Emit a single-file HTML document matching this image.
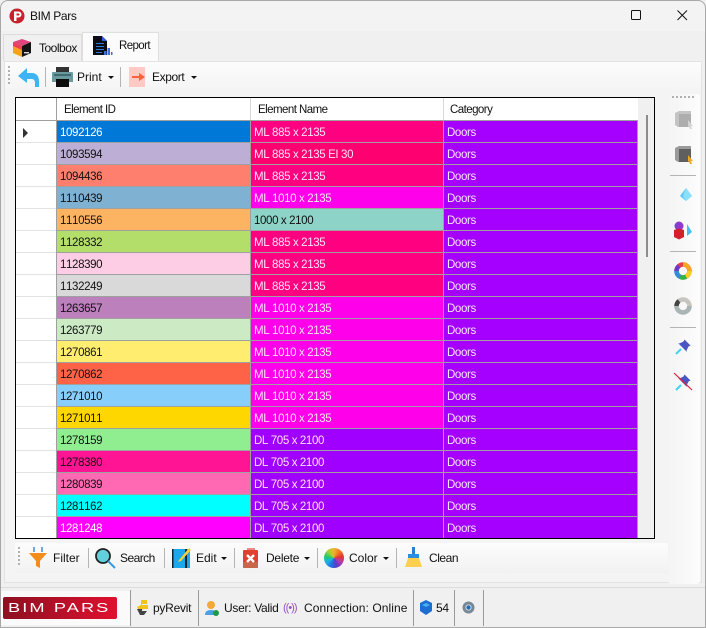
<!DOCTYPE html>
<html><head><meta charset="utf-8"><style>
*{box-sizing:border-box}
html,body{margin:0;padding:0;width:706px;height:628px;overflow:hidden;background:#f0f0f0;font-family:"Liberation Sans",sans-serif;font-size:12px;color:#111}
.a{position:absolute}
.t{position:absolute;white-space:nowrap;font-size:12px;line-height:16px;letter-spacing:-.25px}
.hd{font-size:11.5px;letter-spacing:-.55px}
.row{position:absolute;left:16px;width:622px;height:22px}
.row div{position:absolute;top:0;height:21px;line-height:24px;font-size:11.5px;letter-spacing:-.37px;font-kerning:none;padding-left:3px;white-space:nowrap}
.h{left:0;width:40px;background:#fff;border-bottom:1px solid #e3e3e3;height:22px!important}
.c1{left:41px;width:193px}
.c2{left:235px;width:192px}
.c3{left:428px;width:193px;background:#a500ff;color:#f5e8ff}
.w{color:#fff}.w2{color:#ffe3f4}
.sep{position:absolute;width:1px;background:#b4b4b4}
.car{position:absolute;width:0;height:0;border-left:3px solid transparent;border-right:3px solid transparent;border-top:3px solid #111}
.dots{position:absolute;width:2px;background:repeating-linear-gradient(#b0b0b0 0 2px,transparent 2px 4px)}
svg{position:absolute;overflow:visible}
</style></head><body>
<div class="a" style="left:0;top:0;width:706px;height:628px;background:#f0f0f0;border:1px solid #a8a8a8;border-radius:8px 8px 0 0"></div>
<div class="a" style="left:1px;top:1px;width:704px;height:30px;background:#f3f3f3;border-radius:8px 8px 0 0"></div>

<svg style="left:9px;top:8px" width="17" height="16" viewBox="0 0 17 16"><circle cx="8" cy="8" r="7.5" fill="#c8202c"/><path d="M5 13V3.5h4.5a3 3 0 0 1 0 6H7.5V13z" fill="#fff"/><path d="M7.5 5.5v2h2a1 1 0 0 0 0-2z" fill="#c8202c"/></svg>
<div class="t" style="left:30px;top:8px;letter-spacing:-.35px">BIM Pars</div>
<svg style="left:631px;top:10px" width="11" height="11"><rect x=".5" y=".5" width="9" height="9" rx="1" fill="none" stroke="#111" stroke-width="1"/></svg>
<svg style="left:677px;top:10px" width="11" height="11"><path d="M.5.5l9.5 9.5M10 .5L.5 10" stroke="#111" stroke-width="1" fill="none"/></svg>

<!-- tabs -->
<div class="a" style="left:3px;top:34px;width:79px;height:27px;background:#f0f0f0;border:1px solid #dcdcdc;border-bottom:0"></div>
<div class="a" style="left:82px;top:32px;width:77px;height:29px;background:#fbfbfb;border:1px solid #dfdfdf;border-bottom:0"></div>
<svg style="left:12px;top:37px" width="20" height="21" viewBox="0 0 20 21"><path d="M1 5l9-3 9 3-9 4z" fill="#e0447e"/><path d="M1 5l9 4v11l-9-4z" fill="#f7a21c"/><path d="M1 5l9 4v4l-9-4z" fill="#e8405a"/><path d="M10 9l9-4v11l-9 4z" fill="#141414"/><path d="M12 15h5v1.4h-5z" fill="#ddd"/></svg>
<div class="t" style="left:39px;top:40px;letter-spacing:-.5px">Toolbox</div>
<svg style="left:93px;top:36px" width="20" height="20" viewBox="0 0 20 20"><path d="M0 0h9l5 5v14H0z" fill="#0c0c14"/><path d="M9 0l5 5H9z" fill="#2d5fd8"/><path d="M3 7h8v1H3zM3 10h8v1H3zM3 13h8v1H3zM3 16h6v1H3z" fill="#2e7be0"/><path d="M11 15h2.500v4H11zM14.500 12h2.500v7h-2.500zM18 16h1.500v3H18z" fill="#3a6fe0"/></svg>
<div class="t" style="left:119px;top:38px;font-size:11.5px;letter-spacing:-.6px">Report</div>

<!-- top toolbar -->
<div class="a" style="left:4px;top:61px;width:698px;height:522px;background:#f4f4f4;border:1px solid #e3e3e3"></div>
<div class="a" style="left:5px;top:62px;width:696px;height:30px;background:linear-gradient(#fcfcfc,#f4f4f4)"></div>
<div class="dots" style="left:8px;top:66px;height:20px"></div>
<svg style="left:17px;top:67px" width="23" height="21" viewBox="0 0 23 21"><path d="M10 1L1 9l9 7v-4h5c2 0 3 2 3 4v4h4v-6c0-5-3-8-7-8h-5z" fill="#3eb4f2"/></svg>
<div class="sep" style="left:45px;top:67px;height:20px"></div>
<svg style="left:52px;top:67px" width="21" height="20" viewBox="0 0 21 20"><path d="M4 0h13v5H4z" fill="#333"/><path d="M1 5h19q1 0 1 1v9H0V6q0-1 1-1z" fill="#6a9a9e"/><path d="M4 12h13v8H4z" fill="#0c0c0c"/><path d="M2 7h17v2H2z" fill="#3f6a70"/></svg>
<div class="t" style="left:77px;top:69px;letter-spacing:0">Print</div>
<div class="car" style="left:108px;top:76px"></div>
<div class="sep" style="left:120px;top:67px;height:20px"></div>
<svg style="left:129px;top:67px" width="17" height="20" viewBox="0 0 17 20"><rect width="16" height="20" fill="#ffc9c4"/><path d="M3 9h7V6l6 4-6 4v-3H3z" fill="#f9623a"/></svg>
<div class="t" style="left:152px;top:69px;letter-spacing:-.4px">Export</div>
<div class="car" style="left:191px;top:76px"></div>

<!-- grid -->
<div class="a" style="left:15px;top:97px;width:640px;height:442px;background:#f0f0f0;border:1px solid #000;overflow:hidden"></div>
<div class="a" style="left:16px;top:98px;width:622px;height:22px;background:#fff"></div>
<div class="sep" style="left:56px;top:98px;height:22px;background:#a0a0a0"></div>
<div class="sep" style="left:250px;top:98px;height:22px;background:#d8d8d8"></div>
<div class="sep" style="left:443px;top:98px;height:22px;background:#d8d8d8"></div>
<div class="t hd" style="left:64px;top:102px">Element ID</div>
<div class="t hd" style="left:258px;top:102px">Element Name</div>
<div class="t hd" style="left:450px;top:102px">Category</div>

<div class="a" style="left:16px;top:120px;width:622px;height:418px;overflow:hidden;background:#a0a0a0">
<div class="row" style="left:0;top:1px"><div class="h"></div><div class="c1 w" style="background:#0078d7">1092126</div><div class="c2 w2" style="background:#ff0080">ML 885 x 2135</div><div class="c3">Doors</div></div>
<div class="row" style="left:0;top:23px"><div class="h"></div><div class="c1" style="background:#bcaed4">1093594</div><div class="c2 w2" style="background:#ff0070">ML 885 x 2135 EI 30</div><div class="c3">Doors</div></div>
<div class="row" style="left:0;top:45px"><div class="h"></div><div class="c1" style="background:#ff7f6e">1094436</div><div class="c2 w2" style="background:#ff0080">ML 885 x 2135</div><div class="c3">Doors</div></div>
<div class="row" style="left:0;top:67px"><div class="h"></div><div class="c1" style="background:#7fb1d3">1110439</div><div class="c2 w2" style="background:#ff00ea">ML 1010 x 2135</div><div class="c3">Doors</div></div>
<div class="row" style="left:0;top:89px"><div class="h"></div><div class="c1" style="background:#fdb462">1110556</div><div class="c2" style="background:#8dd3c7">1000 x 2100</div><div class="c3">Doors</div></div>
<div class="row" style="left:0;top:111px"><div class="h"></div><div class="c1" style="background:#b3de69">1128332</div><div class="c2 w2" style="background:#ff0080">ML 885 x 2135</div><div class="c3">Doors</div></div>
<div class="row" style="left:0;top:133px"><div class="h"></div><div class="c1" style="background:#fccde5">1128390</div><div class="c2 w2" style="background:#ff0080">ML 885 x 2135</div><div class="c3">Doors</div></div>
<div class="row" style="left:0;top:155px"><div class="h"></div><div class="c1" style="background:#d9d9d9">1132249</div><div class="c2 w2" style="background:#ff0080">ML 885 x 2135</div><div class="c3">Doors</div></div>
<div class="row" style="left:0;top:177px"><div class="h"></div><div class="c1" style="background:#bc80bd">1263657</div><div class="c2 w2" style="background:#ff00ea">ML 1010 x 2135</div><div class="c3">Doors</div></div>
<div class="row" style="left:0;top:199px"><div class="h"></div><div class="c1" style="background:#ccebc5">1263779</div><div class="c2 w2" style="background:#ff00ea">ML 1010 x 2135</div><div class="c3">Doors</div></div>
<div class="row" style="left:0;top:221px"><div class="h"></div><div class="c1" style="background:#ffed6f">1270861</div><div class="c2 w2" style="background:#ff00ea">ML 1010 x 2135</div><div class="c3">Doors</div></div>
<div class="row" style="left:0;top:243px"><div class="h"></div><div class="c1" style="background:#ff6347">1270862</div><div class="c2 w2" style="background:#ff00ea">ML 1010 x 2135</div><div class="c3">Doors</div></div>
<div class="row" style="left:0;top:265px"><div class="h"></div><div class="c1" style="background:#87cefa">1271010</div><div class="c2 w2" style="background:#ff00ea">ML 1010 x 2135</div><div class="c3">Doors</div></div>
<div class="row" style="left:0;top:287px"><div class="h"></div><div class="c1" style="background:#ffd700">1271011</div><div class="c2 w2" style="background:#ff00ea">ML 1010 x 2135</div><div class="c3">Doors</div></div>
<div class="row" style="left:0;top:309px"><div class="h"></div><div class="c1" style="background:#90ee90">1278159</div><div class="c2 w2" style="background:#a000ff">DL 705 x 2100</div><div class="c3">Doors</div></div>
<div class="row" style="left:0;top:331px"><div class="h"></div><div class="c1" style="background:#ff1493">1278380</div><div class="c2 w2" style="background:#a000ff">DL 705 x 2100</div><div class="c3">Doors</div></div>
<div class="row" style="left:0;top:353px"><div class="h"></div><div class="c1" style="background:#ff69b4">1280839</div><div class="c2 w2" style="background:#a000ff">DL 705 x 2100</div><div class="c3">Doors</div></div>
<div class="row" style="left:0;top:375px"><div class="h"></div><div class="c1" style="background:#00ffff">1281162</div><div class="c2 w2" style="background:#a000ff">DL 705 x 2100</div><div class="c3">Doors</div></div>
<div class="row" style="left:0;top:397px"><div class="h"></div><div class="c1 w" style="background:#ff00ff">1281248</div><div class="c2 w2" style="background:#a000ff">DL 705 x 2100</div><div class="c3">Doors</div></div>
</div>
<svg style="left:23px;top:128px" width="6" height="10"><path d="M0 0l5 5-5 5z" fill="#333"/></svg>
<div class="a" style="left:646px;top:115px;width:2px;height:142px;background:#8c8c8c"></div>

<!-- right toolbar -->
<div class="a" style="left:668px;top:94px;width:32px;height:490px;background:linear-gradient(90deg,#f4f4f4,#fcfcfc);border-radius:3px"></div>
<div class="a" style="left:672px;top:96px;width:24px;height:2px;background:repeating-linear-gradient(90deg,#b0b0b0 0 2px,transparent 2px 4px)"></div>
<svg style="left:675px;top:110px" width="19" height="20" viewBox="0 0 19 20"><path d="M0 3l4-2h12v13l-3 3H3l-3-2z" fill="#c4c4c4"/><path d="M4 4h12v13H4z" fill="#adadad"/><path d="M13 10l5 6-2 0 1 3-2 0-1-3-1 1z" fill="#d4d4d4"/></svg>
<svg style="left:675px;top:145px" width="19" height="20" viewBox="0 0 19 20"><path d="M0 3l4-2h12v13l-3 3H3l-3-2z" fill="#9a9a9a"/><path d="M4 4h12v13H4z" fill="#5f5f5f"/><path d="M13 10l5 6-2 0 1 3-2 0-1-3-1 1z" fill="#f2a91f"/></svg>
<div class="sep" style="left:670px;top:175px;width:26px;height:1px"></div>
<svg style="left:680px;top:188px" width="12" height="13" viewBox="0 0 12 13"><path d="M6 0L0 8l6 5 6-5z" fill="#5cc8f7"/><path d="M6 0L3 8l3 5 6-5z" fill="#8ce0fb"/></svg>
<svg style="left:674px;top:221px" width="19" height="19" viewBox="0 0 19 19"><path d="M13 3l5 8-5 4z" fill="#48bdf2"/><circle cx="5" cy="5" r="4.500" fill="#8c3ccb"/><path d="M0 9l5-1.500L10 9v7l-5 2.500L0 16z" fill="#d4202c"/></svg>
<div class="sep" style="left:670px;top:251px;width:26px;height:1px"></div>
<svg style="left:674px;top:262px" width="18" height="18" viewBox="0 0 36 36" fill="none" stroke-width="9"><circle cx="18" cy="18" r="13" stroke="#e83a4a"/><path d="M18 5a13 13 0 0 1 13 13" stroke="#f7a720"/><path d="M31 18a13 13 0 0 1-7 11.500" stroke="#f5d020"/><path d="M24 29.500a13 13 0 0 1-12 0" stroke="#30b54a"/><path d="M12 29.500a13 13 0 0 1-7-11.500" stroke="#2d8fe0"/><path d="M5 18a13 13 0 0 1 5-10" stroke="#6a3bc8"/></svg>
<svg style="left:674px;top:297px" width="18" height="18" viewBox="0 0 36 36" fill="none" stroke-width="9"><circle cx="18" cy="18" r="13" stroke="#c8c4bf"/><path d="M31 18a13 13 0 0 1-26 0" stroke="#a9b4b4"/><path d="M5 18a13 13 0 0 1 5-10" stroke="#444"/></svg>
<div class="sep" style="left:670px;top:327px;width:26px;height:1px"></div>
<svg style="left:675px;top:339px" width="16" height="16" viewBox="0 0 16 16"><path d="M1 15l5-5" stroke="#3fd4f0" stroke-width="2"/><path d="M9.500 0.500L15.500 6.500 13.500 7.500 11.500 11.500 12 13 3 4 4.500 4.500 8.500 2.500z" fill="#4a55c4"/></svg>
<svg style="left:674px;top:373px" width="18" height="18" viewBox="0 0 18 18"><path d="M2 17l5-5" stroke="#3fd4f0" stroke-width="2"/><path d="M10.500 1.500L16.500 7.500 14.500 8.500 12.500 12.500 13 14 4 5 5.500 5.500 9.500 3.500z" fill="#4a55c4"/><path d="M0 0l18 17" stroke="#e0203a" stroke-width="1.200"/></svg>

<!-- bottom toolbar -->
<div class="a" style="left:15px;top:543px;width:653px;height:30px;background:linear-gradient(#fcfcfc,#f2f2f2)"></div>
<div class="dots" style="left:18px;top:547px;height:20px"></div>
<svg style="left:28px;top:546px" width="20" height="23" viewBox="0 0 20 23"><path d="M1 7h18l-7 8v7l-4-2v-5z" fill="#f48c1c"/><path d="M6 1v5M14 1v5" stroke="#3a8ee6" stroke-width="1.500"/></svg>
<div class="t" style="left:53px;top:550px;letter-spacing:0">Filter</div>
<div class="sep" style="left:88px;top:548px;height:20px"></div>
<svg style="left:95px;top:548px" width="21" height="21" viewBox="0 0 21 21"><circle cx="8" cy="8" r="7" fill="#5fd0dc" stroke="#222" stroke-width="1.800"/><path d="M13 13l7 7" stroke="#3a9ae0" stroke-width="2"/></svg>
<div class="t" style="left:120px;top:550px;letter-spacing:-.55px">Search</div>
<div class="sep" style="left:164px;top:548px;height:20px"></div>
<svg style="left:172px;top:546px" width="21" height="22" viewBox="0 0 21 22"><rect y="3" width="18" height="19" fill="#1aa7ec"/><rect x="13" y="3" width="2" height="19" fill="#123"/><rect y="3" width="1.500" height="19" fill="#123"/><path d="M7 14l10-12 2 2-10 11-3 1z" fill="#f7cf3a"/></svg>
<div class="t" style="left:196px;top:550px;letter-spacing:0">Edit</div>
<div class="car" style="left:221px;top:557px"></div>
<div class="sep" style="left:234px;top:548px;height:20px"></div>
<svg style="left:243px;top:548px" width="16" height="20" viewBox="0 0 16 20"><rect x="4" width="8" height="3" fill="#e88" /><rect y="2" width="15" height="18" rx="1" fill="#e04030"/><rect y="14" width="15" height="6" rx="1" fill="#c8654a"/><path d="M4 7l7 7M11 7l-7 7" stroke="#fff" stroke-width="2.400"/></svg>
<div class="t" style="left:266px;top:550px">Delete</div>
<div class="car" style="left:304px;top:557px"></div>
<div class="sep" style="left:317px;top:548px;height:20px"></div>
<div class="a" style="left:324px;top:548px;width:20px;height:20px;border-radius:50%;background:conic-gradient(#f0b030,#f27a20,#e23434,#b83ab0,#5a3bc8,#2070e0,#20b0e8,#20c870,#a8d030,#f0b030)"></div>
<div class="t" style="left:349px;top:550px;letter-spacing:0">Color</div>
<div class="car" style="left:383px;top:557px"></div>
<div class="sep" style="left:396px;top:548px;height:20px"></div>
<svg style="left:404px;top:547px" width="19" height="22" viewBox="0 0 19 22"><path d="M8 0h3v7H8z" fill="#2a7fd0"/><path d="M4 7h11v4H4z" fill="#2a8fe0"/><path d="M4 11h11l3 9H1z" fill="#fbd050"/></svg>
<div class="t" style="left:429px;top:550px;letter-spacing:-.45px">Clean</div>

<!-- status -->
<div class="a" style="left:1px;top:587px;width:704px;height:40px;background:#f0f0f0;border-top:1px solid #dcdcdc"></div>
<div class="a" style="left:1px;top:591px;width:129px;height:34px;background:#fafafa"></div>
<div class="a" style="left:3px;top:597px;width:114px;height:22px;background:linear-gradient(90deg,#8c1020,#e01030);border-radius:2px"></div>
<div class="a" style="left:8px;top:597px;color:#fff;font-size:13px;line-height:22px;letter-spacing:1.500px;white-space:nowrap;transform:scaleX(1.400);transform-origin:left">BIM PARS</div>
<div class="sep" style="left:130px;top:590px;height:36px;background:#9a9a9a"></div>
<svg style="left:136px;top:600px" width="14" height="15" viewBox="0 0 14 15"><path d="M5 0h6v4H6v1h6v4H8L3 11 1 7l4-2z" fill="#f4c21c"/><path d="M1 9h5v2l5 0-3 4H4z" fill="#444"/></svg>
<div class="t" style="left:153px;top:600px">pyRevit</div>
<div class="sep" style="left:198px;top:590px;height:36px;background:#9a9a9a"></div>
<svg style="left:205px;top:601px" width="14" height="15" viewBox="0 0 14 15"><circle cx="6" cy="4" r="4" fill="#f2a93a"/><path d="M0 14q0-5 6-5t6 5z" fill="#4aa0e0"/><circle cx="11" cy="12" r="3" fill="#1c9a4a"/></svg>
<div class="t" style="left:224px;top:600px;letter-spacing:-.3px">User: Valid</div>
<div class="a" style="left:283px;top:600px;color:#9a52c8;font-size:11px;line-height:16px;letter-spacing:-1px;white-space:nowrap">((•))</div>
<div class="t" style="left:304px;top:600px;letter-spacing:.08px">Connection: Online</div>
<div class="sep" style="left:413px;top:590px;height:36px;background:#9a9a9a"></div>
<svg style="left:419px;top:600px" width="14" height="15" viewBox="0 0 14 15"><path d="M7 0l6 3v8l-6 4-6-4V3z" fill="#1c6fd0"/><path d="M7 3l4 2-4 2-4-2z" fill="#4ab0f0"/></svg>
<div class="t" style="left:436px;top:600px">54</div>
<div class="sep" style="left:454px;top:590px;height:36px;background:#9a9a9a"></div>
<svg style="left:462px;top:601px" width="13" height="13" viewBox="0 0 13 13"><circle cx="6.500" cy="6.500" r="4.500" fill="none" stroke="#7a8894" stroke-width="3"/><circle cx="6.500" cy="6.500" r="2.200" fill="#1c6fb8"/></svg>
<div class="sep" style="left:483px;top:590px;height:36px;background:#9a9a9a"></div>
</body></html>
